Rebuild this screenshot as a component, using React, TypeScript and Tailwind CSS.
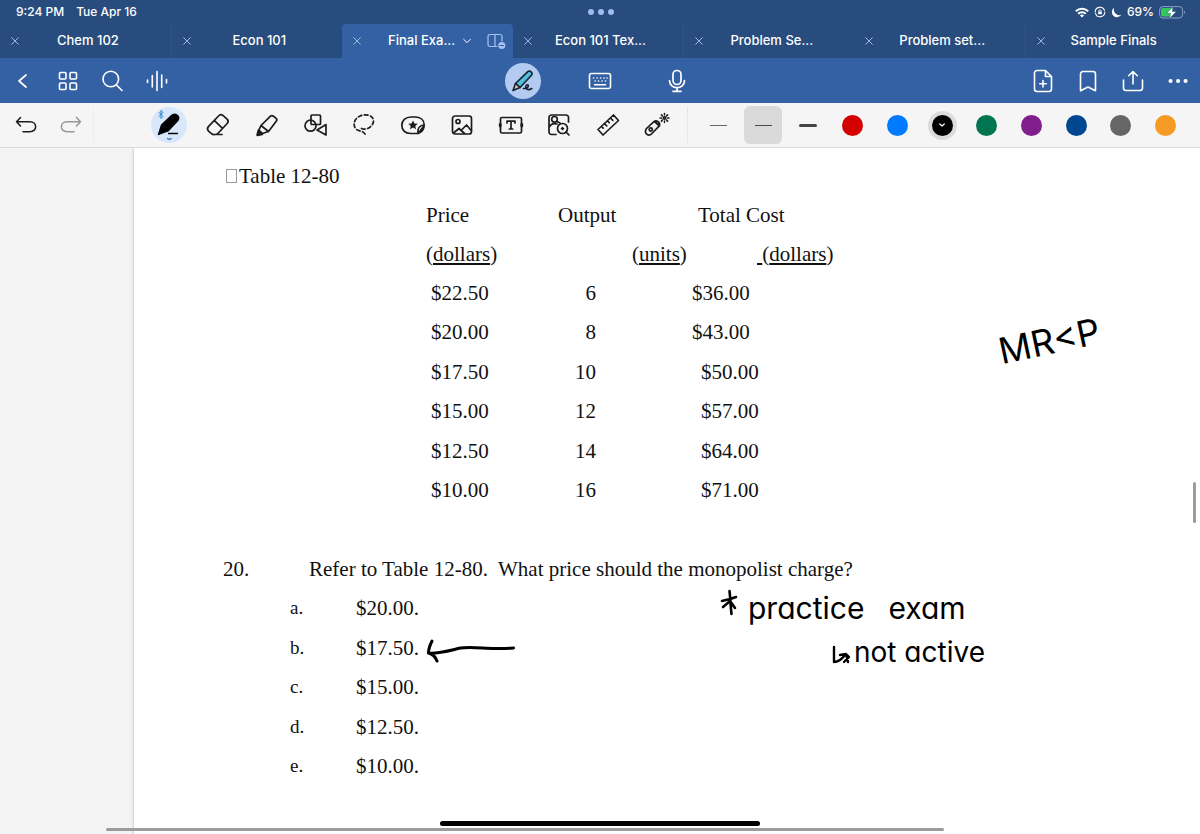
import React from "react";

const ink = { fill: "none", stroke: "currentColor", strokeLinecap: "round", strokeLinejoin: "round" } as const;

function Icon({ children, size = 24, width = 1.5, className = "" }: { children: React.ReactNode; size?: number; width?: number; className?: string }) {
  return (
    <svg width={size} height={size} viewBox="0 0 24 24" strokeWidth={width} {...ink} className={`shrink-0 ${className}`} aria-hidden="true">
      {children}
    </svg>
  );
}

const CloseIcon = () => (
  <Icon size={8} width={3} className="text-[#a3b8d8]">
    <path d="M2 2 22 22M22 2 2 22" />
  </Icon>
);

function StatusBar() {
  return (
    <div className="grid h-6 grid-cols-3 items-center pl-4 pr-[14px] text-[12px] font-medium">
      <div className="flex gap-3">
        <span>9:24 PM</span>
        <span>Tue Apr 16</span>
      </div>
      <div className="flex justify-center gap-1">
        <span className="size-[6px] rounded-full bg-[#9dbcf0]" />
        <span className="size-[6px] rounded-full bg-[#9dbcf0]" />
        <span className="size-[6px] rounded-full bg-[#9dbcf0]" />
      </div>
      <div className="flex items-center justify-end gap-[5px]">
        <svg width="14" height="11" viewBox="0 0 14 11" {...ink} strokeLinecap="butt" strokeWidth="2" aria-hidden="true">
          <path d="M.8 4.2a8.8 8.8 0 0 1 12.4 0M3.2 6.8a5.4 5.4 0 0 1 7.6 0" />
          <path d="M7 10.6 4.9 8.500a3 3 0 0 1 4.200 0Z" fill="currentColor" stroke="none" />
        </svg>
        <svg width="12" height="12" viewBox="0 0 12 12" {...ink} strokeWidth="1.1" aria-hidden="true">
          <path d="M1.2 6a4.800 4.800 0 0 1 9.300-1.600M10.800 6a4.800 4.800 0 0 1-9.300 1.600" />
          <path d="M4.200 5.600h3.600v2.600H4.200Z" fill="currentColor" stroke="none" />
          <path d="M4.900 5.600v-.7a1.100 1.100 0 0 1 2.200 0v.7" strokeWidth=".8" />
        </svg>
        <svg width="11" height="11" viewBox="0 0 11 11" fill="currentColor" aria-hidden="true">
          <path d="M3.200.6a5.200 5.200 0 1 0 7.200 7.200A5.600 5.600 0 0 1 3.200.6Z" />
        </svg>
        <span>69%</span>
        <svg width="27" height="13" viewBox="0 0 27 13" fill="none" aria-hidden="true">
          <rect x=".6" y=".6" width="23" height="11.4" rx="3.4" stroke="#8aa2c4" />
          <path d="M25.200 4.600c1.200.5 1.200 3 0 3.500Z" fill="#8aa2c4" />
          <rect x="2" y="2" width="12" height="8.600" rx="2" fill="#34c759" />
          <path d="M14.200.4 7.600 7.200h4l-1.200 5.400L17.400 5.600h-4.200Z" fill="#fff" stroke="#284c7e" strokeWidth=".5" />
        </svg>
      </div>
    </div>
  );
}

const tabs = ["Chem 102", "Econ 101", "Final Exa...", "Econ 101 Tex...", "Problem Se...", "Problem set...", "Sample Finals"];

function Tabs() {
  return (
    <nav className="grid h-[34px] grid-cols-7 pr-1 text-[13px] font-medium">
      {tabs.map((name, i) =>
        i === 2 ? (
          <div key={name} className="flex items-center rounded-t bg-[#3461a3] pl-[11px] pr-[7px]">
            <button aria-label={`Close ${name}`}><CloseIcon /></button>
            <button className="flex flex-1 items-center justify-center gap-2 whitespace-nowrap pl-3">
              {name}
              <Icon size={8} width={3}><path d="m2 7 10 10L22 7" /></Icon>
            </button>
            <button aria-label="Split view" className="text-[#a9c3ee]">
              <svg width="19" height="17" viewBox="0 0 19 17" {...ink} strokeWidth="1.2" aria-hidden="true">
                <path d="M10 13.500H3a2 2 0 0 1-2-2v-8a2 2 0 0 1 2-2h10a2 2 0 0 1 2 2V8M8 1.500v12" />
                <circle cx="14.800" cy="12.500" r="3.500" fill="currentColor" stroke="none" />
                <path d="M13 12.500h3.600" stroke="#3461a3" />
              </svg>
            </button>
          </div>
        ) : (
          <div key={name} className={`flex items-center pl-[11px] pr-[14px] ${i === 1 || i === 4 || i === 6 ? "border-l border-[#2f5488]" : ""}`}>
            <button aria-label={`Close ${name}`}><CloseIcon /></button>
            <button className="flex-1 whitespace-nowrap">{name}</button>
          </div>
        ),
      )}
    </nav>
  );
}

function NavButton({ label, children, wide = false }: { label: string; children: React.ReactNode; wide?: boolean }) {
  return (
    <button aria-label={label} className={`flex h-[45px] items-center justify-center ${wide ? "w-[77px]" : "w-[45px]"}`}>
      {children}
    </button>
  );
}

function NavBar() {
  return (
    <div className="grid h-[45px] grid-cols-[1fr_auto_1fr] bg-[#3461a3]">
      <div className="flex">
        <NavButton label="Back"><Icon size={24} width={1.700}><path d="m15 6-7 6 7 6" /></Icon></NavButton>
        <NavButton label="Thumbnails">
          <Icon size={24} width={1.600}>
            <rect x="3.500" y="3.500" width="6.500" height="6.500" rx="1" /><rect x="14" y="3.500" width="6.500" height="6.500" rx="1" />
            <rect x="3.500" y="14" width="6.500" height="6.500" rx="1" /><rect x="14" y="14" width="6.500" height="6.500" rx="1" />
          </Icon>
        </NavButton>
        <NavButton label="Search"><Icon size={24} width={1.600}><circle cx="9.800" cy="10" r="7.800" /><path d="m15.500 16 5.500 5.500" /></Icon></NavButton>
        <NavButton label="Audio"><Icon size={24} width={1.600}><path d="M1.500 11v2.500M6.300 6.500V18M11 2.500v19M15.700 6v12.500M20.500 10.500v3.500" /></Icon></NavButton>
      </div>
      <div className="flex">
        <NavButton label="Write" wide>
          <span className="flex size-9 items-center justify-center rounded-full bg-[#b3cbf0] text-[#16202e]">
            <Icon size={24} width={1.600}>
              <path d="M4.500 14.500 16.800 2.600c2.200-1.800 5.400 1.200 3.700 3.600L9 18.500Z" fill="#4fc0dc" />
              <path d="M4.500 14.500 2 21.500l7-3Z" fill="#e8c9a0" />
              <path d="M12.500 19.500c3 .2 5.500-1.500 4.700-3.300-1-1.500-3.300.7-2.200 3 1.200 2 3.500 1.800 5.800.3" />
            </Icon>
          </span>
        </NavButton>
        <NavButton label="Keyboard" wide>
          <Icon size={24} width={1.600}>
            <rect x="1.500" y="4.500" width="21" height="15" rx="2" />
            <path d="M5.500 9h.1M9 9h.1M12.500 9h.1M16 9h.1M19 9h.1M7 12h.1M10.500 12h.1M14 12h.1M17.500 12h.1M6.500 15.700h11" />
          </Icon>
        </NavButton>
        <NavButton label="Record" wide>
          <Icon size={24} width={1.700}>
            <rect x="8" y="1.500" width="8" height="14" rx="4" />
            <path d="M4.500 11.500c0 9.500 15 9.500 15 0M12 18.700v3.600M8 22.300h8" />
          </Icon>
        </NavButton>
      </div>
      <div className="flex justify-end">
        <NavButton label="Add page">
          <Icon size={24} width={1.600}>
            <path d="M14.500 1.500H6a2.500 2.500 0 0 0-2.500 2.500v16A2.500 2.500 0 0 0 6 22.500h12a2.500 2.500 0 0 0 2.500-2.500V7.500ZM14.500 1.500v6h6M12 11.500v6.500M8.700 14.800h6.600" />
          </Icon>
        </NavButton>
        <NavButton label="Bookmark"><Icon size={24} width={1.600}><path d="M4.500 21.800V5a2.500 2.500 0 0 1 2.500-2.500h10A2.500 2.500 0 0 1 19.500 5v16.800L12 18Z" /></Icon></NavButton>
        <NavButton label="Share"><Icon size={24} width={1.600}><path d="M12 15V2.500M7.700 6.700 12 2.500l4.300 4.200M2.500 11v8.500a2.500 2.500 0 0 0 2.500 2h14a2.500 2.500 0 0 0 2.500-2V11" /></Icon></NavButton>
        <NavButton label="More"><Icon size={24} width={4}><path d="M4.500 12h.1M12 12h.1M19.500 12h.1" /></Icon></NavButton>
      </div>
    </div>
  );
}

const tools: { name: string; art: React.ReactNode }[] = [
  {
    name: "Eraser",
    art: <path d="M8.800 21.500c-1.200.3-2.300 0-3.300-.9l-2.700-2.300c-1.700-1.500-1.800-3-.4-4.700L12.500 3c1.400-1.600 3-1.700 4.700-.3l3.600 3.100c1.700 1.400 1.800 3 .4 4.700L12.300 20c-1 1.100-2.100 1.600-3.500 1.500ZM8.500 7.700l7.800 7.400M8.800 21.500H16" />,
  },
  {
    name: "Highlighter",
    art: (
      <>
        <path d="m6 12.500 9.500-9.300c.8-.8 1.700-.9 2.600-.2l3 2.400c.9.7 1 1.600.3 2.500L13.500 18.500l-6.200 2-3.500-3.300ZM6 12.500l7.500 6" />
        <path d="M3.600 17.500 7 21l-4.500 1Z" fill="currentColor" strokeWidth="2.500" />
      </>
    ),
  },
  {
    name: "Shapes",
    art: <><rect x="7" y="2" width="9.500" height="9.500" rx="1" /><circle cx="6.500" cy="12.700" r="5.500" /><path d="M22 11.500 13 17l9 5Z" /></>,
  },
  {
    name: "Lasso",
    art: <path strokeDasharray="3.600 2.600" d="M9.500 15.500C14 18 22 13 21.500 7.500 21 2 13 .5 8 3 1.500 6 .5 13 4.500 16.500c3 2 7 1 9 5.500" />,
  },
  {
    name: "Stickers",
    art: (
      <>
        <path d="M17 20.500H9.500C4 20.500.8 17 .8 12.200S4.500 4 10 4h4c5.500 0 9.200 3 9.200 8M17 20.500c-.8-5 1.500-8.500 6.200-8.500 0 4-2.200 7-6.200 8.500ZM17.500 20l4.500-6" />
        <path d="m12 7.500 1.500 3 3.300.3-2.500 2.200.7 3.200-3-1.600-3 1.600.7-3.200-2.500-2.200 3.300-.3Z" fill="currentColor" stroke="none" />
      </>
    ),
  },
  {
    name: "Image",
    art: <><rect x="2.500" y="3" width="19" height="18" rx="2.500" /><circle cx="8" cy="8.500" r="2" /><path d="m3.500 20 5.500-4.500 5.500 5M11.500 17l5-5 4.700 5.500" /></>,
  },
  {
    name: "Text",
    art: <><rect x="1.500" y="4.500" width="21" height="15.500" rx="1.500" /><path d="M8 10V8.200h8V10M12 8.200V16M10.300 16h3.400" /><path d="M1.200 11.500v1.500M22.800 11.500v1.500" strokeWidth="2.800" /></>,
  },
  {
    name: "Elements",
    art: (
      <>
        <path d="M9 21.500H4.500A2.500 2.500 0 0 1 2 19V4.500A2.500 2.500 0 0 1 4.500 2H19a2.500 2.500 0 0 1 2.500 2.500V9M2 14.500c2-4 5-4.500 8-3.500" />
        <circle cx="7.500" cy="6.300" r="2.800" /><circle cx="15.500" cy="15.500" r="5" /><path d="m19 19 3 3M14.500 15.500h2M15.500 14.500v2M10 8.500l3 1.500" />
      </>
    ),
  },
  {
    name: "Ruler",
    art: <path d="M17.500 2 2 16.500l5 5.500L22.500 7.500ZM14.500 5l2.300 2.300M11.500 8l1.700 1.700M8.500 10.700l2.300 2.300M5.500 13.500l1.700 1.700" />,
  },
  {
    name: "Laser pointer",
    art: (
      <>
        <path d="m1.500 15.500 7.200-6.700c1.600-1.300 3-1.200 4.600.2s1.800 2.800.5 4.300l-7.400 7.700c-1.500 1.500-3 1.400-4.700.1S.1 17.200 1.500 15.500ZM9.500 8.500l5 4.500" />
        <circle cx="5.800" cy="16.500" r="1.600" />
        <path strokeWidth="1.500" d="M19.500.5v1.500M19.500 8v1.500M15 5h1.500M22.500 5h1.500M16.400 1.900l1 1M21.600 7.100l1 1M22.600 1.900l-1 1M17.400 7.100l-1 1" />
        <circle cx="19.500" cy="5" r="1.200" />
      </>
    ),
  },
];

const swatches = ["bg-[#d40000]", "bg-[#007aff]", "bg-black", "bg-[#00754f]", "bg-[#7f1e8c]", "bg-[#004690]", "bg-[#666666]", "bg-[#f59a23]"];
const colorNames = ["Red", "Blue", "Black", "Green", "Purple", "Navy", "Gray", "Orange"];

function ToolBar() {
  return (
    <div className="flex h-[45px] items-center border-b border-[#dcdcdc] bg-[#f5f5f5] text-[#1c1c1c]">
      <div className="flex h-9 w-[94px] shrink-0 items-center border-r border-[#ededed] pl-1">
        <button aria-label="Undo" className="flex w-[45px] justify-center"><Icon><path d="M6.500 4.500 2.500 8.700l4 4.300M2.500 8.700H16c7.500 0 7.500 10 0 10H9" /></Icon></button>
        <button aria-label="Redo" className="flex w-[45px] justify-center text-[#969696]"><Icon><path d="m17.500 4.500 4 4.200-4 4.300M21.500 8.700H8c-7.500 0-7.500 10 0 10h7" /></Icon></button>
      </div>
      <div className="flex h-9 flex-1 items-center border-r border-[#e6e6e6] pl-[51px] pr-[6px]">
        <button aria-label="Pen" className="flex flex-1 justify-center">
          <span className="flex size-9 shrink-0 items-center justify-center rounded-full bg-[#d8e7fa]">
            <svg width="36" height="36" viewBox="0 0 36 36" {...ink} strokeWidth="1.300" aria-hidden="true">
              <path d="M7.500 27.500 10.500 18 20.500 8.500c3.500-3.200 9 .2 6.600 4.700L17 24Z" fill="#000" stroke="#000" />
              <path d="M17.500 26.500h9" stroke="#000" />
              <path d="m8 5.500 4 4-2 2v-8l2 2-4 4" stroke="#2d84cc" strokeWidth="1" />
              <path d="M16.500 31.500c1.200 1.200 2.400 1.200 3.600 0" stroke="#2d6fc0" />
            </svg>
          </span>
        </button>
        {tools.map((t) => (
          <button key={t.name} aria-label={t.name} className="flex flex-1 justify-center">
            <Icon size={24} width={1.700} className="overflow-visible">{t.art}</Icon>
          </button>
        ))}
      </div>
      <div className="flex w-[512px] shrink-0 items-center pl-2 pr-3">
        <button aria-label="Thin stroke" className="flex h-9 flex-1 items-center justify-center"><span className="h-px w-[17px] bg-[#666]" /></button>
        <button aria-label="Medium stroke" className="flex flex-1 justify-center">
          <span className="flex size-[38px] shrink-0 items-center justify-center rounded-md bg-[#dadadb]"><span className="h-px w-[17px] bg-[#4a4a4a]" /></span>
        </button>
        <button aria-label="Thick stroke" className="flex h-9 flex-1 items-center justify-center"><span className="h-[3px] w-[18px] rounded-full bg-[#444]" /></button>
        {swatches.map((c, i) => (
          <button key={c} aria-label={colorNames[i]} className="flex flex-1 justify-center">
            <span className={`flex size-[21px] shrink-0 items-center justify-center rounded-full text-white ${c} ${i === 2 ? "ring-4 ring-[#dcdcdc]" : ""}`}>
              {i === 2 && <Icon size={6} width={5}><path d="m3 8 9 8 9-8" /></Icon>}
            </span>
          </button>
        ))}
      </div>
    </div>
  );
}

const rows = [
  ["$22.50", "6", "$36.00"],
  ["$20.00", "8", "$43.00"],
  ["$17.50", "10", "$50.00"],
  ["$15.00", "12", "$57.00"],
  ["$12.50", "14", "$64.00"],
  ["$10.00", "16", "$71.00"],
];
const answers = ["$20.00.", "$17.50.", "$15.00.", "$12.50.", "$10.00."];

const Unit = ({ name }: { name: string }) => (
  <>(<u className="underline-offset-2">{name}</u>)</>
);

function Page() {
  return (
    <main className="relative flex flex-1 overflow-hidden bg-[#f3f3f3] pl-[133px]">
      <article className="flex-1 border-l border-[#d9d9d9] bg-white pl-[89px] pt-2 font-['Liberation_Serif',serif] text-[21px] leading-[24px] text-[#111] shadow">
        <h1 className="flex h-[39px] items-center gap-[2px] pl-[3px]">
          <span className="h-[14px] w-[11px] border border-[#999]" />
          Table 12-80
        </h1>
        <table className="ml-[203px] h-[315px] w-[424px] table-fixed border-collapse text-left">
          <colgroup><col className="w-[132px]" /><col className="w-[74px]" /><col className="w-[60px]" /><col /></colgroup>
          <thead>
            <tr className="h-[39px]">
              <th className="p-0 font-normal">Price</th>
              <th className="p-0 font-normal" colSpan={2}>Output</th>
              <th className="p-0 pl-[6px] font-normal">Total Cost</th>
            </tr>
            <tr className="h-[39px]">
              <th className="p-0 font-normal"><Unit name="dollars" /></th>
              <th className="p-0" />
              <th className="p-0 font-normal"><Unit name="units" /></th>
              <th className="p-0 pl-[65px] font-normal"><u className="underline-offset-2">&nbsp;</u><Unit name="dollars" /></th>
            </tr>
          </thead>
          <tbody>
            {rows.map(([price, output, cost]) => (
              <tr key={price} className="h-[39px]">
                <td className="p-0 pl-[5px]">{price}</td>
                <td className="p-0 pr-9 text-right">{output}</td>
                <td className="p-0" />
                <td className={`p-0 ${output.length > 1 ? "pl-[9px]" : ""}`}>{cost}</td>
              </tr>
            ))}
          </tbody>
        </table>
        <section className="mt-[39px] grid h-[237px] grid-rows-6">
          <h2 className="flex items-center"><span className="w-[86px]">20.</span><span className="whitespace-pre">Refer to Table 12-80.  What price should the monopolist charge?</span></h2>
          {answers.map((a, i) => (
            <div key={a} className="flex items-center pl-[67px]"><span className="w-[66px] text-[19px]">{"abcde"[i]}.</span><span>{a}</span></div>
          ))}
        </section>
      </article>

      <div className="absolute left-[998px] top-[173px] -rotate-12 font-['Inter',sans-serif] text-[36px] leading-[40px] text-black">MR&lt;P</div>
      <div className="absolute left-[748px] top-[438px] font-['Inter',sans-serif] text-[30px] leading-[44px] text-black [font-feature-settings:'cv11']">
        <p className="flex gap-6"><span>practice</span><span>exam</span></p>
        <p className="pl-[106px] text-[28px]">not active</p>
      </div>
      <svg className="absolute left-[420px] top-[440px]" width="440" height="84" viewBox="420 588 440 84" {...ink} stroke="#000" strokeWidth="3" aria-hidden="true">
        <path d="M432 641c-2 4-3.500 8-3.500 12 9 1 19-2 32-5 13-2 30 2 53 0M428.500 653c4 1 7 4 8.500 8" />
        <path d="M729.500 591c1 8 1 15 2 23M722 601c5-1 9-2 14-4M723 607l7-6M730 601l5 7" strokeWidth="2.600" />
        <path d="M834 647v15c5 0 8-3 11-7M840 655l6-1 3 3-5 5M846 654l2 8" strokeWidth="2.400" />
      </svg>

      <span className="absolute right-1 top-[334px] h-[41px] w-[3px] rounded-full bg-[#9b9b9b]" />
      <span className="absolute bottom-[3px] left-[106px] right-[256px] h-[3px] rounded-full bg-[#9b9b9b]" />
      <span className="absolute bottom-2 left-1/2 h-[5px] w-[320px] -translate-x-1/2 rounded-full bg-black" />
    </main>
  );
}

export default function App() {
  return (
    <div className="flex min-h-screen flex-col font-['Inter',sans-serif]">
      <header className="bg-[#284c7e] text-white">
        <StatusBar />
        <Tabs />
        <NavBar />
      </header>
      <ToolBar />
      <Page />
    </div>
  );
}
